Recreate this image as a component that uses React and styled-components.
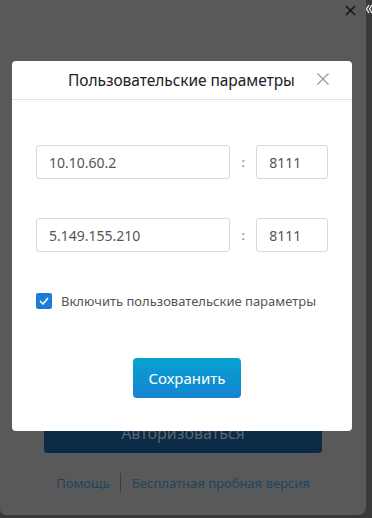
import React from "react";
import styled, { createGlobalStyle } from "styled-components";

const Global = createGlobalStyle`
  html, body { margin: 0; padding: 0; background: #3a3a3a; }
  body { font-family: "Noto Sans", "Open Sans", sans-serif; width: 372px; height: 518px; overflow: hidden; }
`;

const Screen = styled.div`
  position: relative;
  width: 372px;
  height: 518px;
  display: flex;
`;

const Window = styled.div`
  position: relative;
  width: 366px;
  height: 515px;
  background: #595959;
  border-bottom-right-radius: 8px;
  border-bottom-left-radius: 6px;
  display: flex;
  flex-direction: column;
  align-items: center;
`;

const EdgeGlyph = styled.svg`
  position: absolute;
  top: 4px;
  right: 0;
  width: 6px;
  height: 10px;
`;

const TopBar = styled.div`
  align-self: stretch;
  display: flex;
  justify-content: flex-end;
  padding: 5px 10px 0 0;
  height: 20px;
`;

const CloseMain = styled.svg`
  width: 11px;
  height: 11px;
`;

const LogoPeek = styled.svg`
  margin-top: 37px;
  align-self: flex-start;
  margin-left: 84px;
`;

const Spacer = styled.div`
  height: 329px;
`;

const AuthButton = styled.div`
  width: 278px;
  height: 56px;
  background: #0b2b46;
  border-radius: 3px;
  color: #5b6670;
  font-size: 16px;
  display: flex;
  align-items: flex-end;
  justify-content: center;
  padding-bottom: 9px;
  box-sizing: border-box;
`;

const Links = styled.div`
  margin-top: 20px;
  display: flex;
  align-items: center;
  font-size: 13px;
  color: #1c4663;
`;

const Sep = styled.span`
  width: 1px;
  height: 20px;
  background: #3d3d3d;
  margin: 0 11px 0 10px;
`;

const Modal = styled.div`
  position: absolute;
  left: 12px;
  top: 61px;
  width: 340px;
  height: 370px;
  background: #fff;
  border-radius: 4px;
  display: flex;
  flex-direction: column;
`;

const Header = styled.div`
  height: 38px;
  border-bottom: 1px solid #e3e3e3;
  display: flex;
  align-items: center;
  position: relative;
  padding-left: 56px;
`;

const Title = styled.div`
  font-size: 15.5px;
  color: #222;
  letter-spacing: -0.05px;
`;

const CloseX = styled.svg`
  position: absolute;
  right: 23px;
  top: 12px;
  width: 12px;
  height: 12px;
`;

const Body = styled.div`
  padding: 45px 24px 0 24px;
  display: flex;
  flex-direction: column;
`;

const Row = styled.div`
  display: flex;
  align-items: center;
  margin-bottom: ${(p) => p.$mb}px;
`;

const Input = styled.div`
  width: ${(p) => p.$w}px;
  height: 34px;
  box-sizing: border-box;
  border: 1px solid #d9d9d9;
  border-radius: 3px;
  padding-left: 12px;
  display: flex;
  align-items: center;
  font-size: 14px;
  color: #555;
`;

const Colon = styled.span`
  width: 26px;
  text-align: center;
  color: #777;
  font-size: 13px;
`;

const CheckRow = styled.div`
  display: flex;
  align-items: center;
  margin-top: 6px;
  font-size: 13px;
  color: #555;
`;

const Box = styled.span`
  width: 16px;
  height: 16px;
  border-radius: 2px;
  background: #1a7fd4;
  display: flex;
  align-items: center;
  justify-content: center;
  margin-right: 9px;
`;

const SaveButton = styled.div`
  align-self: flex-start;
  margin: 48px 0 0 97px;
  width: 108px;
  height: 40px;
  border-radius: 4px;
  background: linear-gradient(#08a1d1, #1584d1);
  color: #fff;
  font-size: 15px;
  display: flex;
  align-items: center;
  justify-content: center;
`;

export default function App() {
  return (
    <Screen>
      <Global />
      <Window>
        <TopBar>
          <CloseMain viewBox="0 0 11 11">
            <path d="M1 1L10 10M10 1L1 10" stroke="#111" strokeWidth="1.4" />
          </CloseMain>
        </TopBar>
        <LogoPeek width="100" height="6" viewBox="0 0 100 6">
          <rect x="2" y="2" width="5" height="4" fill="#0e3a57" />
          <rect x="33" y="1" width="5" height="5" fill="#0e3a57" />
          <rect x="86" y="2" width="5" height="4" fill="#0e3a57" />
        </LogoPeek>
        <Spacer />
        <AuthButton>Авторизоваться</AuthButton>
        <Links>
          <span>Помощь</span>
          <Sep />
          <span>Бесплатная пробная версия</span>
        </Links>
        <Modal>
          <Header>
            <Title>Пользовательские параметры</Title>
            <CloseX viewBox="0 0 12 12">
              <path d="M0.5 0.5L11.5 11.5M11.5 0.5L0.5 11.5" stroke="#9a9a9a" strokeWidth="1.3" />
            </CloseX>
          </Header>
          <Body>
            <Row $mb={39}>
              <Input $w={195}>10.10.60.2</Input>
              <Colon>:</Colon>
              <Input $w={72}>8111</Input>
            </Row>
            <Row $mb={34}>
              <Input $w={195}>5.149.155.210</Input>
              <Colon>:</Colon>
              <Input $w={72}>8111</Input>
            </Row>
            <CheckRow>
              <Box>
                <svg width="10" height="8" viewBox="0 0 10 8">
                  <path d="M1 4L4 7L9 1" stroke="#fff" strokeWidth="1.5" fill="none" />
                </svg>
              </Box>
              Включить пользовательские параметры
            </CheckRow>
            <SaveButton>Сохранить</SaveButton>
          </Body>
        </Modal>
      </Window>
      <EdgeGlyph viewBox="0 0 6 10">
        <path d="M3 1L0.5 5L3 9M6 1L3.5 5L6 9" stroke="#e6e6e6" strokeWidth="1.4" fill="none" />
      </EdgeGlyph>
    </Screen>
  );
}
